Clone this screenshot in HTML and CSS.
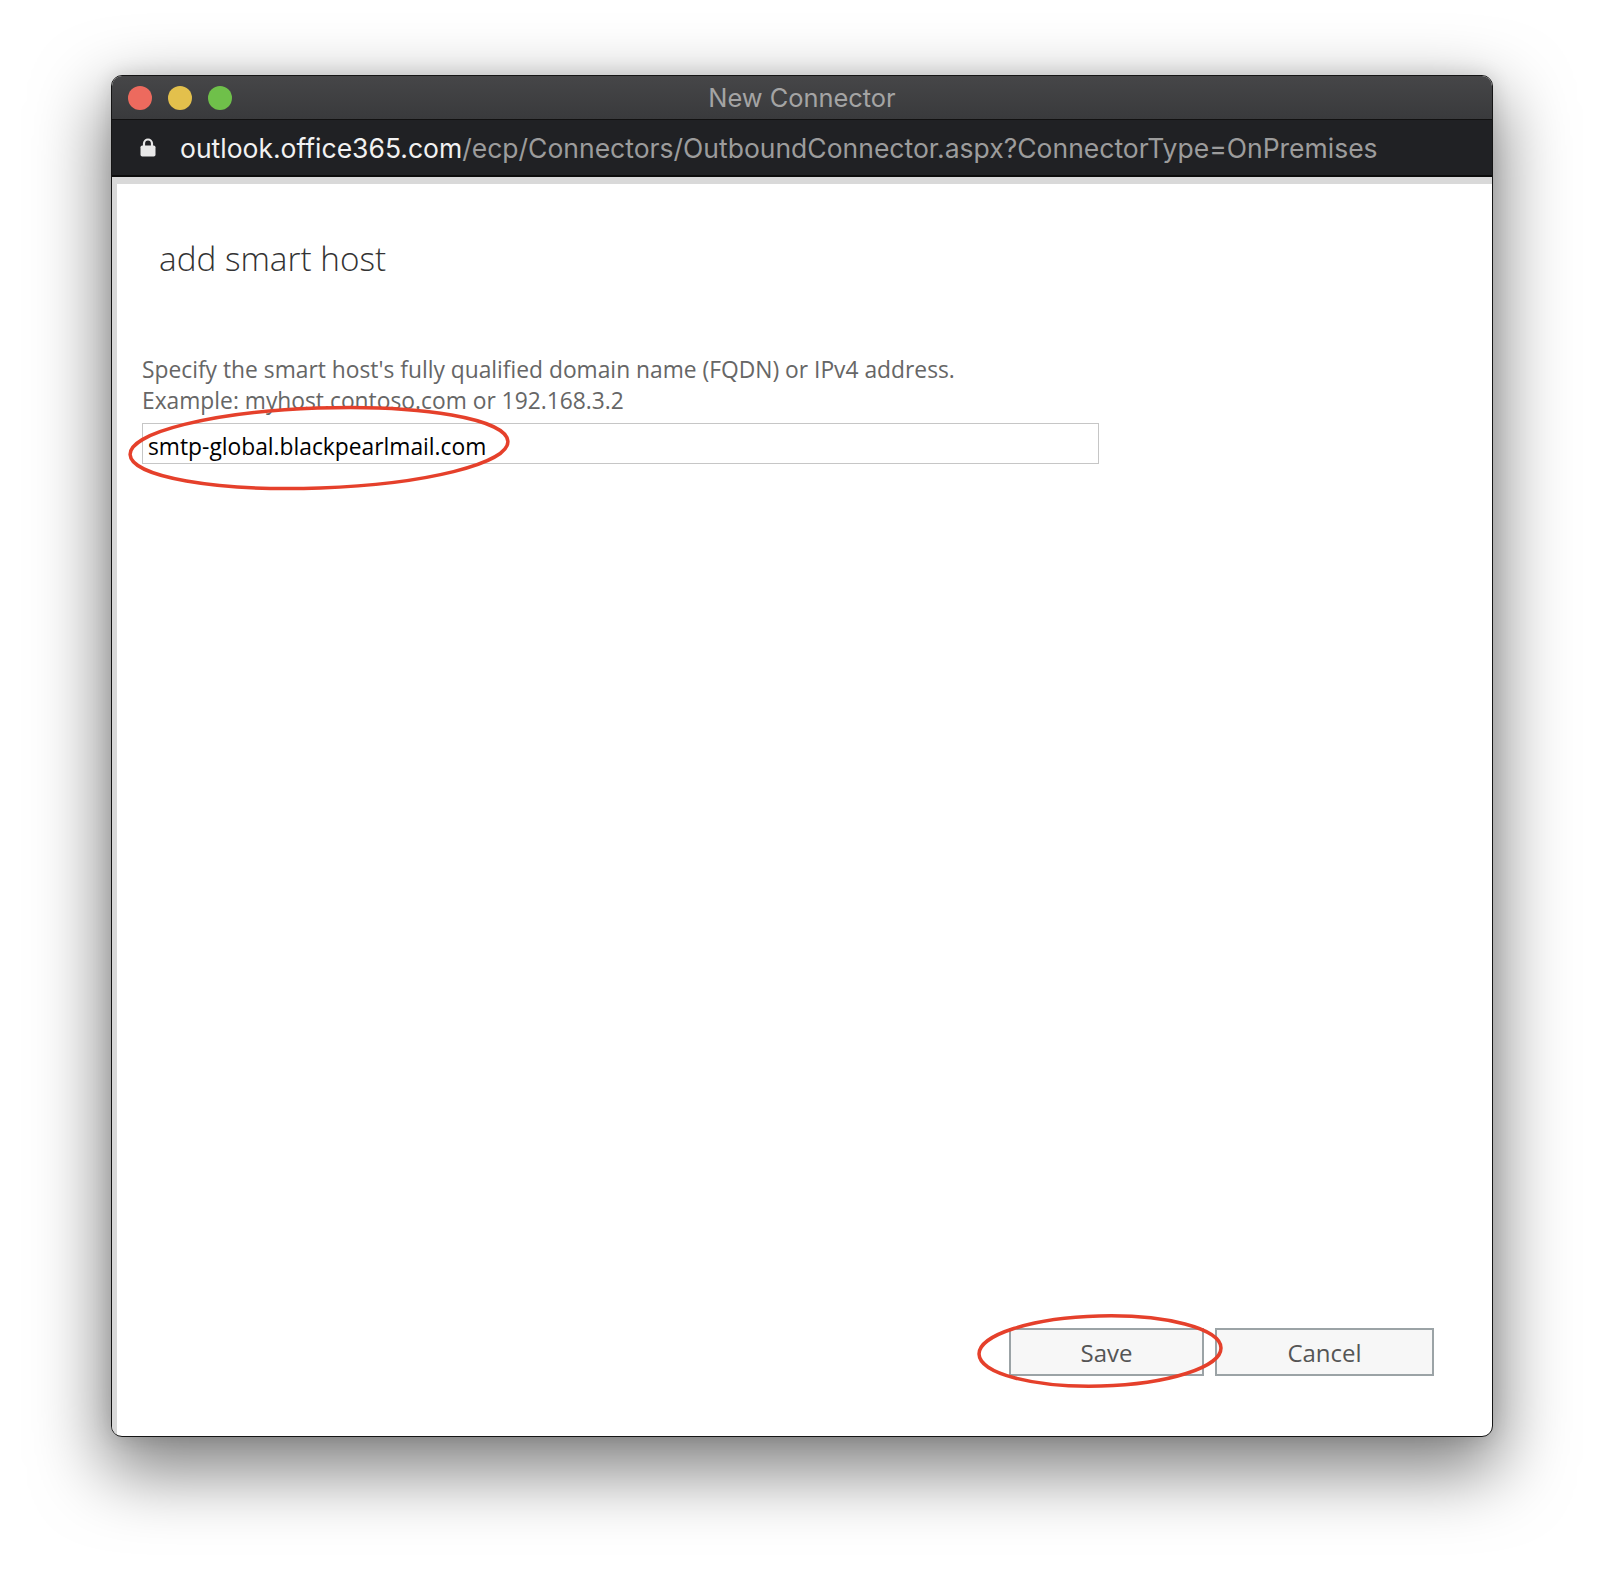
FILE: index.html
```html
<!DOCTYPE html>
<html lang="en">
<head>
    <meta charset="UTF-8">
    <title>New Connector</title>
    <link rel="stylesheet" href="styles.css">
</head>
<body>
    <div class="window">
        <div class="titlebar">
            <div class="lights">
                <span class="light red"></span>
                <span class="light yellow"></span>
                <span class="light green"></span>
            </div>
            <div class="title">New Connector</div>
        </div>
        <div class="urlbar">
            <svg class="lock" width="16" height="20" viewBox="0 0 16 20">
                <path d="M4 9V6.5a4 4 0 0 1 8 0V9" fill="none" stroke="#e8e8e8" stroke-width="2.2"/>
                <rect x="0.5" y="8.5" width="15" height="11" rx="1.8" fill="#e8e8e8"/>
            </svg>
            <div class="url"><span class="domain">outlook.office365.com</span>/ecp/Connectors/OutboundConnector.aspx?ConnectorType=OnPremises</div>
        </div>
        <div class="content">
            <h1>add smart host</h1>
            <p class="hint">Specify the smart host's fully qualified domain name (FQDN) or IPv4 address.<br>Example: myhost.contoso.com or 192.168.3.2</p>
            <input class="field" type="text" value="smtp-global.blackpearlmail.com">
            <div class="actions">
                <button class="btn">Save</button>
                <button class="btn cancel">Cancel</button>
            </div>
        </div>
    </div>

    <!-- red annotation marks drawn over the screenshot -->
    <svg class="marks" width="1604" height="1584" viewBox="0 0 1604 1584">
        <ellipse cx="319" cy="448" rx="189" ry="40" transform="rotate(-2 319 448)" fill="none" stroke="#e5402b" stroke-width="3.5"/>
        <ellipse cx="1100" cy="1351" rx="121" ry="35" transform="rotate(-1.5 1100 1351)" fill="none" stroke="#e5402b" stroke-width="3.5"/>
    </svg>
</body>
</html>
```

FILE: styles.css
```css
body {
    margin: 0;
    padding: 75px 0 0 111px;
    background-color: #ffffff;
    width: 1604px;
    height: 1584px;
    box-sizing: border-box;
    overflow: hidden;
    position: relative;
}
.window {
    width: 1382px;
    height: 1362px;
    box-sizing: border-box;
    border: 1px solid #151515;
    border-radius: 11px;
    overflow: hidden;
    display: flex;
    flex-direction: column;
    background-color: #ffffff;
    box-shadow: 0 28px 70px 6px rgba(0, 0, 0, 0.5), 0 0 20px rgba(0, 0, 0, 0.12);
}
.titlebar {
    height: 43px;
    flex-shrink: 0;
    position: relative;
    display: flex;
    align-items: center;
    background: linear-gradient(#464648, #393a3c);
    border-bottom: 1px solid #111111;
}
.lights {
    display: flex;
    gap: 16px;
    padding-left: 16px;
}
.light {
    width: 24px;
    height: 24px;
    border-radius: 50%;
}
.red { background-color: #ed6a5e; }
.yellow { background-color: #e3c04c; }
.green { background-color: #6fc04a; }
.title {
    position: absolute;
    left: 0;
    right: 0;
    text-align: center;
    font-family: 'Inter', 'Liberation Sans', sans-serif;
    font-size: 25.4px;
    color: #a4a4a4;
    pointer-events: none;
}
.urlbar {
    height: 55px;
    flex-shrink: 0;
    display: flex;
    align-items: center;
    gap: 24px;
    padding-left: 28px;
    background-color: #202124;
    border-bottom: 2px solid #0c0c0c;
}
.lock {
    display: block;
    margin-top: -2px;
}
.url {
    font-family: 'Inter', 'Liberation Sans', sans-serif;
    font-size: 26.5px;
    color: #9c9c9c;
    white-space: nowrap;
}
.domain {
    color: #f2f2f2;
}
.content {
    flex: 1;
    display: flex;
    flex-direction: column;
    align-items: flex-start;
    border-top: 7px solid #d9d9d9;
    border-left: 5px solid #d9d9d9;
    padding: 0 58px 60px 25px;
    font-family: 'Open Sans', 'Noto Sans', sans-serif;
}
h1 {
    margin: 52px 0 0 17px;
    font-size: 33.3px;
    line-height: 44px;
    font-weight: 300;
    color: #333333;
}
.hint {
    margin: 74px 0 0 0;
    font-size: 22.8px;
    line-height: 31px;
    color: #666666;
}
.field {
    margin-top: 7px;
    width: 957px;
    height: 41px;
    box-sizing: border-box;
    border: 1px solid #c6c6c6;
    padding: 5px 5px 0;
    font-family: 'Open Sans', 'Noto Sans', sans-serif;
    font-size: 22.8px;
    color: #000000;
    background-color: #ffffff;
    outline: none;
}
.actions {
    margin-top: auto;
    align-self: flex-end;
    display: flex;
    gap: 11px;
}
.btn {
    width: 195px;
    height: 48px;
    border: 2px solid #9ba3a6;
    background-color: #f7f7f7;
    font-family: 'Open Sans', 'Noto Sans', sans-serif;
    font-size: 24px;
    color: #555555;
    padding: 0;
}
.btn.cancel {
    width: 219px;
}
.marks {
    position: absolute;
    left: 0;
    top: 0;
    pointer-events: none;
}
```
